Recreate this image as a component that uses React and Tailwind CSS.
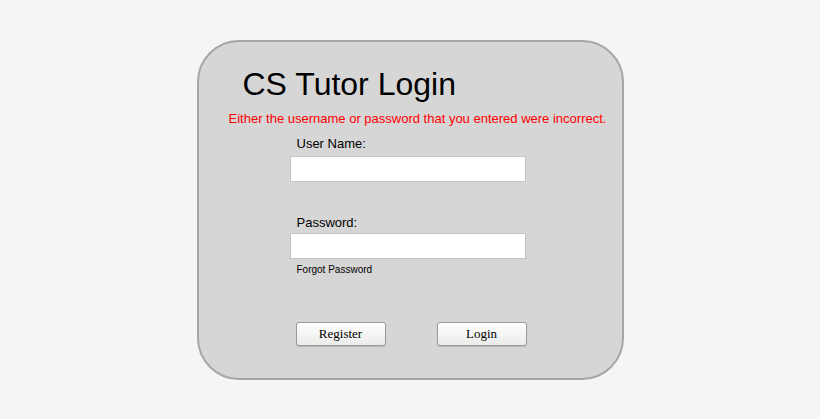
export default function App() {
  return (
    <div className="w-[820px] h-[419px] bg-[#f5f5f5] flex items-center justify-center font-['Liberation_Sans',Arial,sans-serif]">
      <div className="w-[427px] h-[340px] bg-[#d6d6d6] border-2 border-[#a6a6a6] rounded-[42px] flex flex-col">
        <h1 className="ml-[44px] mt-[24px] text-[32px] leading-[36px] text-black">CS Tutor Login</h1>
        <p className="ml-[30px] mt-[9px] text-[13px] leading-[16px] text-[#ff0000]">
          Either the username or password that you entered were incorrect.
        </p>
        <div className="ml-[91px] mt-[9px] w-[236px] flex flex-col">
          <label className="ml-[7px] text-[13px] leading-[16px] text-black">User Name:</label>
          <input type="text" className="mt-[4px] h-[26px] w-[236px] bg-white border border-[#c4c4c4] outline-none" />
          <label className="ml-[7px] mt-[33px] text-[13px] leading-[16px] text-black">Password:</label>
          <input type="password" className="mt-[2px] h-[26px] w-[236px] bg-white border border-[#c4c4c4] outline-none" />
          <span className="ml-[7px] mt-[5px] text-[10px] leading-[12px] text-black">Forgot Password</span>
        </div>
        <div className="ml-[97px] mt-[46px] flex gap-[51px]">
          <button className="w-[90px] h-[24px] rounded-[3px] border border-[#9a9a9a] bg-gradient-to-b from-white to-[#ebebea] font-['Liberation_Serif','Times_New_Roman',serif] text-[13px] text-black shadow-[0_1px_1px_rgba(0,0,0,0.15)]">
            Register
          </button>
          <button className="w-[90px] h-[24px] rounded-[3px] border border-[#9a9a9a] bg-gradient-to-b from-white to-[#ebebea] font-['Liberation_Serif','Times_New_Roman',serif] text-[13px] text-black shadow-[0_1px_1px_rgba(0,0,0,0.15)]">
            Login
          </button>
        </div>
      </div>
    </div>
  )
}
